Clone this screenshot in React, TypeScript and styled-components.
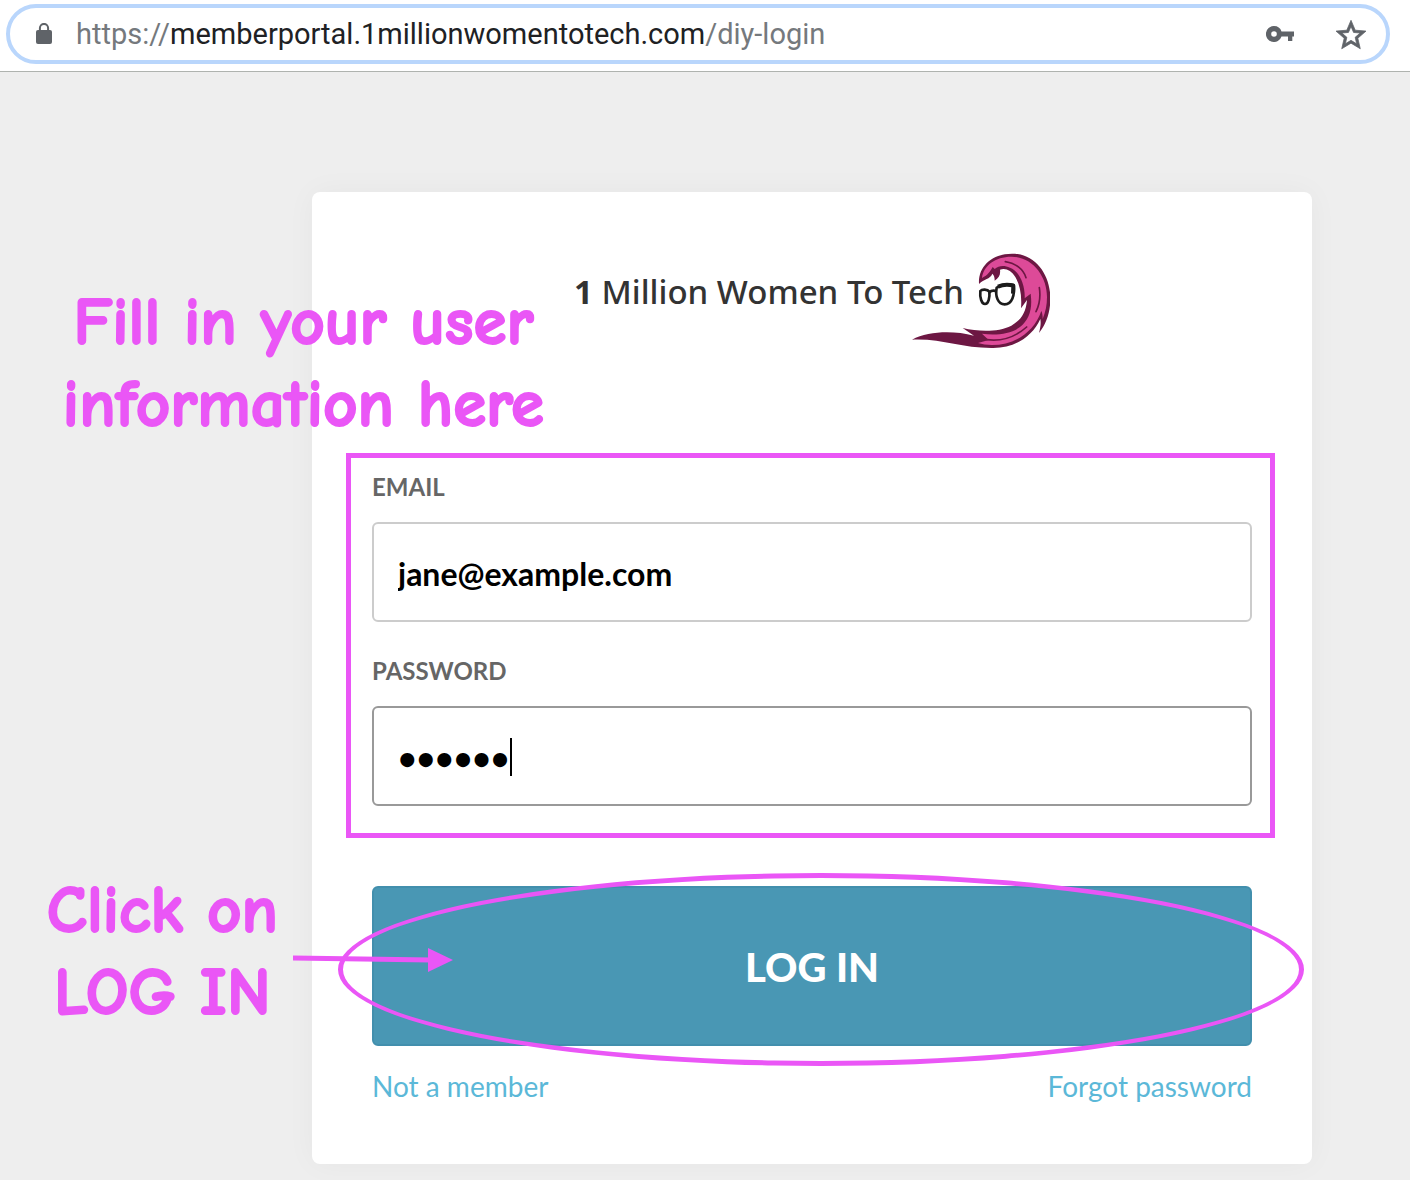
import React, { useState } from "react";
import styled, { createGlobalStyle } from "styled-components";

const pink = "#ea56f6";

const GlobalStyle = createGlobalStyle`
  *, *::before, *::after { box-sizing: border-box; }
  body { margin: 0; background: #eee; font-family: Lato, "Open Sans", sans-serif; }
`;

const Page = styled.div`
  min-height: 100vh;
  display: flex;
  flex-direction: column;
`;

const BrowserBar = styled.header`
  padding: 4px 20px 7px 6px;
  background: #fff;
  border-bottom: 1px solid #afb3af;
`;

const AddressBar = styled.div`
  display: flex;
  align-items: center;
  height: 60px;
  padding: 0 20px 0 26px;
  border: 4px solid #b9d6fc;
  border-radius: 30px;
`;

const Address = styled.div`
  flex: 1;
  min-width: 0;
  margin-left: 24px;
  overflow: hidden;
  white-space: nowrap;
  outline: none;
  color: #75797d;
  font: 400 29px/40px Roboto, sans-serif;
`;

const Host = styled.span`
  color: #202124;
`;

const IconButton = styled.button`
  display: flex;
  margin-left: 42px;
  padding: 0;
  border: 0;
  background: none;
  color: #5f6368;
`;

const Main = styled.main`
  flex: 1;
  display: flex;
  justify-content: flex-end;
  align-items: flex-start;
  padding: 120px 98px 16px 20px;
`;

const Card = styled.section`
  position: relative;
  width: 100%;
  max-width: 1000px;
  padding: 60px 60px 58px;
  border-radius: 8px;
  background: #fff;
  box-shadow: 0 0 30px rgba(0, 0, 0, 0.04);
`;

const Logo = styled.div`
  display: flex;
  justify-content: center;
  align-items: flex-start;
  height: 96px;
`;

const LogoName = styled.h1`
  margin: 18px 0 0;
  color: #333;
  font: 500 33px/44px "Noto Sans", sans-serif;
  white-space: nowrap;
`;

const LogoNumber = styled.span`
  font-weight: 700;
`;

const LogoMark = styled.svg`
  flex: none;
  margin-left: -52px;
`;

const Form = styled.form`
  margin-top: 124px;
`;

const Fields = styled.div`
  position: relative;
  display: grid;
  gap: 34px;
`;

const Field = styled.div`
  position: relative;
  display: grid;
  gap: 20px;
`;

const Label = styled.label`
  color: #666;
  font-size: 24px;
  font-weight: 700;
  line-height: 30px;
`;

const Input = styled.input<{ $active?: boolean }>`
  width: 100%;
  height: 100px;
  padding: 2px 24px 0;
  border: 2px solid ${(p) => (p.$active ? "#999" : "#ccc")};
  border-radius: 6px;
  outline: none;
  background: #fff;
  color: #000;
  font: 700 32px/40px Lato, sans-serif;
`;

const Caret = styled.span`
  position: absolute;
  left: 138px;
  bottom: 30px;
  width: 2px;
  height: 38px;
  background: #000;
`;

const HighlightBox = styled.div`
  position: absolute;
  inset: -19px -23px -32px -26px;
  border: 5px solid ${pink};
  pointer-events: none;
`;

const Submit = styled.div`
  position: relative;
  margin-top: 80px;
`;

const LoginButton = styled.button`
  display: block;
  width: 100%;
  height: 160px;
  padding: 2px 0 0;
  border: 2px solid #428fad;
  border-radius: 6px;
  background: #4997b4;
  color: #fff;
  font: 900 40px/50px Lato, sans-serif;
`;

const Ellipse = styled.div`
  position: absolute;
  inset: -13px -52px -20px -34px;
  border: 5px solid ${pink};
  border-radius: 50%;
  pointer-events: none;
`;

const Arrow = styled.svg`
  position: absolute;
  top: 60px;
  left: -79px;
  pointer-events: none;
`;

const Links = styled.nav`
  display: flex;
  justify-content: space-between;
  margin-top: 20px;
`;

const TextLink = styled.a`
  color: #5bb8d8;
  font-size: 28px;
  line-height: 40px;
  text-decoration: none;
`;

const Note = styled.p<{ $top: number; $right: number }>`
  position: absolute;
  top: ${(p) => p.$top}px;
  right: ${(p) => p.$right}px;
  margin: 0;
  color: ${pink};
  font: 700 67px/82px "Comic Sans MS", "Comic Neue", Lato, sans-serif;
  -webkit-text-stroke: 2px ${pink};
  text-align: center;
  white-space: nowrap;
  pointer-events: none;
`;

const LockIcon = () => (
  <svg width="16" height="22" viewBox="0 0 16 22" aria-hidden="true">
    <path d="M3.9 8V5a4.1 4.1 0 0 1 8.2 0v3" fill="none" stroke="#5f6368" strokeWidth="2" />
    <rect y="7" width="16" height="14" rx="2" fill="#5f6368" />
  </svg>
);

const KeyIcon = () => (
  <svg width="28" height="16" viewBox="0 0 28 16" aria-hidden="true">
    <path
      fill="currentColor"
      fillRule="evenodd"
      d="M8 0a8 8 0 1 0 7.500 10.500H22V15h4.300v-4.500H28v-5H15.500A8 8 0 0 0 8 0Zm0 5.200a2.800 2.800 0 1 1 0 5.600 2.800 2.800 0 0 1 0-5.600Z"
    />
  </svg>
);

const StarIcon = () => (
  <svg width="30" height="29" viewBox="2 2 20 19" overflow="visible" aria-hidden="true">
    <path
      fill="currentColor"
      stroke="currentColor"
      strokeWidth="0.5"
      d="M22 9.240l-7.190-.62L12 2 9.190 8.630 2 9.240l5.460 4.730L5.820 21 12 17.270 18.180 21l-1.630-7.030L22 9.240zM12 15.400l-3.760 2.270 1-4.280-3.320-2.880 4.380-.38L12 6.100l1.710 4.040 4.380.38-3.320 2.880 1 4.280L12 15.400z"
    />
  </svg>
);

const Wave = () => (
  <LogoMark width="138" height="96" viewBox="42 21 414 288" aria-hidden="true">
    <path
      fill="#6d1743"
      d="M243 117C240 62 285 26 342 26C412 26 457 88 457 160C457 202 445 236 423 264C428 246 429 234 427 222C402 276 350 310 280 309C190 309 130 280 42 284C92 258 165 256 228 272L194 249C242 260 300 262 340 242C368 226 384 204 387 165L369 190C372 150 366 120 352 96C340 76 322 68 306 74C308 90 303 98 290 107C290 96 288 90 283 86C276 104 258 100 243 117Z"
    />
    <path
      fill="#dd4a98"
      d="M252 99C256 62 292 35 340 35C402 35 447 92 447 156C447 180 443 200 434 222C434 212 433 204 430 198C408 262 350 300 282 300C266 300 252 298 240 294L272 285L252 266C296 272 340 266 366 246C394 224 404 192 398 146L380 160C382 122 366 80 336 68C318 60 302 62 290 72L284 66C276 80 270 90 252 99Z"
    />
    <path
      fill="none"
      stroke="#6d1743"
      strokeWidth="5"
      strokeLinecap="round"
      d="M322 50C352 54 376 72 384 98M266 284C310 290 352 276 386 246M424 128C428 154 424 180 414 200"
    />
    <g fill="none" stroke="#1c1c1c" strokeWidth="8" strokeLinejoin="round">
      <path d="M247 138C252 132 268 132 274 140C276 158 271 177 261 177C251 177 245 158 247 138Z" />
      <path d="M296 128C308 118 334 116 347 120C351 150 342 178 320 178C300 178 291 154 296 128Z" />
      <path d="M274 143C280 136 288 136 296 139" />
      <path strokeWidth="12" d="M300 125C314 119 334 119 346 122L345 146" />
    </g>
  </LogoMark>
);

export default function App() {
  const [email, setEmail] = useState("jane@example.com");
  const [password, setPassword] = useState("secret");

  return (
    <Page>
      <GlobalStyle />
      <BrowserBar>
        <AddressBar>
          <LockIcon />
          <Address role="textbox" aria-label="Address" tabIndex={0}>
            https://<Host>memberportal.1millionwomentotech.com</Host>/diy-login
          </Address>
          <IconButton type="button" aria-label="Saved passwords">
            <KeyIcon />
          </IconButton>
          <IconButton type="button" aria-label="Bookmark this page">
            <StarIcon />
          </IconButton>
        </AddressBar>
      </BrowserBar>
      <Main>
        <Card>
          <Logo>
            <LogoName>
              <LogoNumber>1</LogoNumber> Million Women To Tech
            </LogoName>
            <Wave />
          </Logo>
          <Form onSubmit={(e) => e.preventDefault()}>
            <Fields>
              <Field>
                <Label htmlFor="email">EMAIL</Label>
                <Input id="email" type="email" value={email} onChange={(e) => setEmail(e.target.value)} />
              </Field>
              <Field>
                <Label htmlFor="password">PASSWORD</Label>
                <Input
                  id="password"
                  type="password"
                  $active
                  value={password}
                  onChange={(e) => setPassword(e.target.value)}
                />
                <Caret />
              </Field>
              <HighlightBox />
            </Fields>
            <Submit>
              <LoginButton type="submit">LOG IN</LoginButton>
              <Ellipse />
              <Arrow width="160" height="28" viewBox="0 0 160 28" aria-hidden="true">
                <path d="M0 12L138 14" stroke={pink} strokeWidth="5" />
                <path d="M135 2L160 14L135 26Z" fill={pink} />
              </Arrow>
            </Submit>
            <Links>
              <TextLink href="#join">Not a member</TextLink>
              <TextLink href="#forgot">Forgot password</TextLink>
            </Links>
          </Form>
          <Note $top={90} $right={768}>
            Fill in your user
            <br />
            information here
          </Note>
          <Note $top={678} $right={1034}>
            Click on
            <br />
            LOG IN
          </Note>
        </Card>
      </Main>
    </Page>
  );
}
